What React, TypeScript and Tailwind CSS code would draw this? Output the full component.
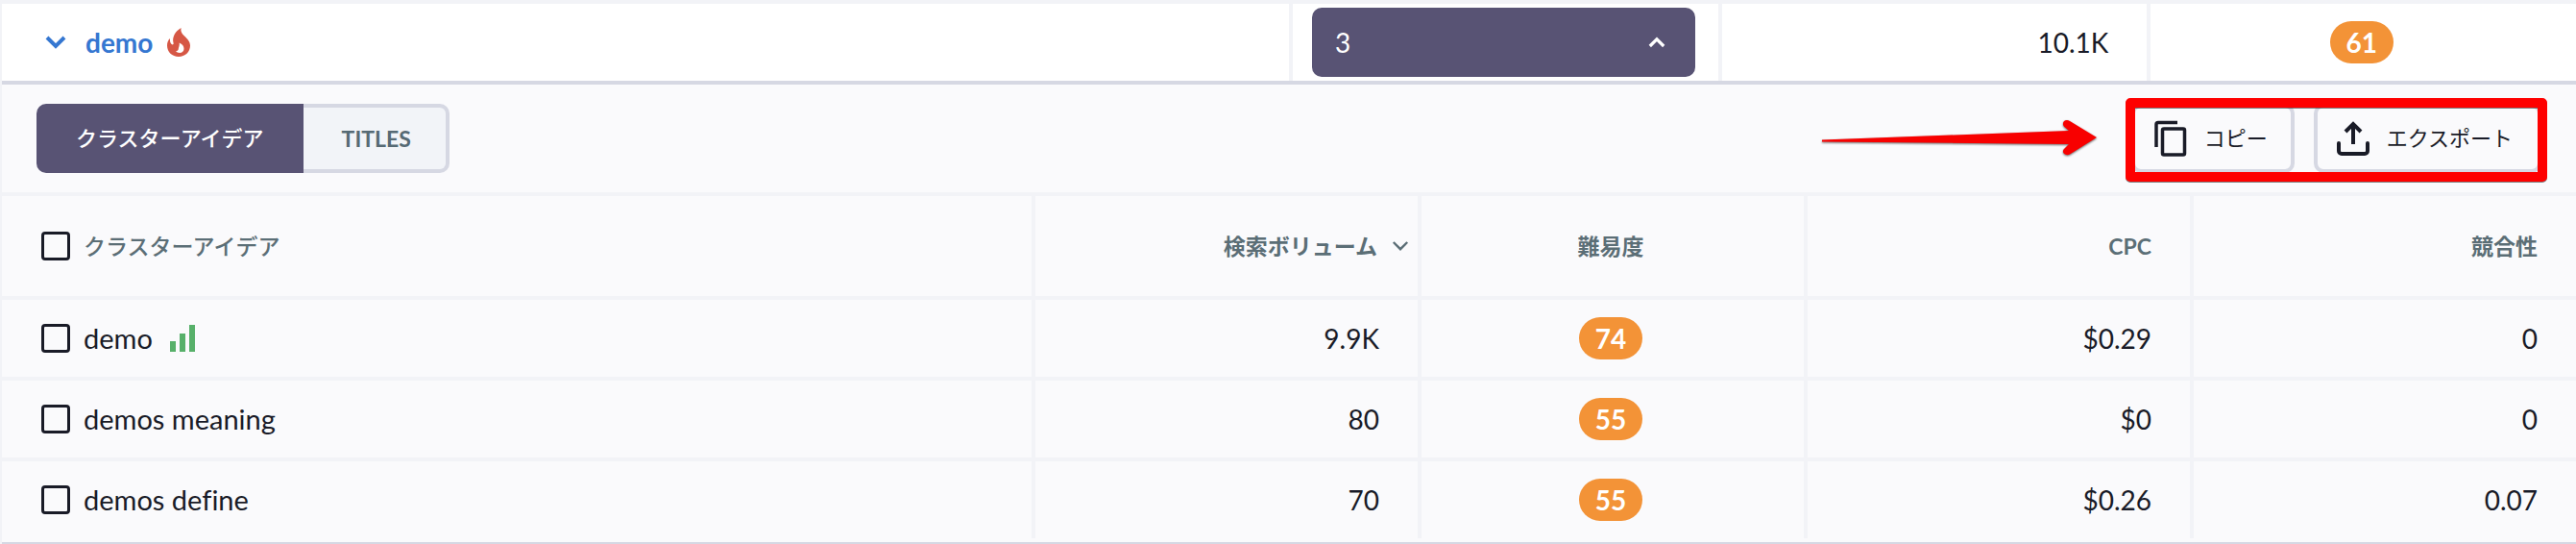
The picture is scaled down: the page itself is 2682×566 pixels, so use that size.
import type { ReactNode } from "react";

const rows = [
  { keyword: "demo", volume: "9.9K", difficulty: 74, cpc: "$0.29", competition: "0", trending: true },
  { keyword: "demos meaning", volume: "80", difficulty: 55, cpc: "$0", competition: "0" },
  { keyword: "demos define", volume: "70", difficulty: 55, cpc: "$0.26", competition: "0.07" },
];

const divider = "shadow-[inset_4px_0_0_#f2f3f7]";

function Chevron({ className, up = false, strokeWidth = 4 }: { className?: string; up?: boolean; strokeWidth?: number }) {
  return (
    <svg viewBox="0 0 40 40" fill="none" stroke="currentColor" strokeWidth={strokeWidth} className={className}>
      <path d={up ? "M11 25 20 16l9 9" : "M11 15l9 9 9-9"} />
    </svg>
  );
}

function Flame() {
  return (
    <svg viewBox="0 0 24 30" className="h-[30px] w-6 text-[#d65745]" fill="currentColor">
      <path
        fillRule="evenodd"
        d="M14.600 0C13.800 4 15.500 6 18 8.500 21 11.500 24 14 24 18.500 24 25 18.800 30 12 30S0 25 0 18.500C0 15.500.8 13 3 11c-.3 3 .3 5.500 2.500 6.500.8 0 1.500-.7 1-2C5 9.500 8.500 3.500 14.600 0ZM12.700 15.500c.4 3.300-.7 4.300-1 6.700-.2 1.200-1.300 2-2.700 1.800.8 1.300 2.200 2 4 2 2.700 0 4.500-1.700 4.500-4.200 0-2.700-1.800-5-4.800-6.300Z"
      />
    </svg>
  );
}

function SignalBars() {
  return (
    <svg viewBox="0 0 26 28" className="h-7 w-[26px]" fill="#57b06a">
      <rect y="17" width="6" height="11" />
      <rect x="10" y="9" width="6" height="19" />
      <rect x="20" width="6" height="28" />
    </svg>
  );
}

function CopyIcon() {
  return (
    <svg viewBox="0 0 40 40" className="size-10" fill="none" stroke="currentColor" strokeWidth="3.5">
      <path d="M6 29V5.500a2 2 0 0 1 2-2H28" />
      <rect x="12.500" y="10" width="23" height="27" rx="1.500" />
    </svg>
  );
}

function ExportIcon() {
  return (
    <svg viewBox="0 0 40 40" className="size-10" fill="none" stroke="currentColor" strokeWidth="4">
      <path d="M6 25v8a3 3 0 0 0 3 3h24a3 3 0 0 0 3-3v-8" strokeLinecap="round" />
      <path d="M21 26V6M13 13l8-8 8 8" />
    </svg>
  );
}

function Badge({ children }: { children: ReactNode }) {
  return (
    <span className="inline-flex h-11 w-[66px] items-center justify-center rounded-full bg-[#f39337] font-bold text-white">
      {children}
    </span>
  );
}

function Checkbox({ label }: { label: string }) {
  return (
    <input
      type="checkbox"
      aria-label={label}
      className="size-[30px] shrink-0 appearance-none rounded-[4px] border-3 border-[#191b27] checked:bg-[#191b27]"
    />
  );
}

function Toolbar() {
  return (
    <div className="flex h-28 items-center justify-between px-9 text-[22px]">
      <div className="flex h-[72px]">
        <button type="button" className="rounded-l-[10px] bg-[#585374] px-[41px] font-medium text-white">
          クラスターアイデア
        </button>
        <button
          type="button"
          className="rounded-r-[10px] border-4 border-l-0 border-[#d6d8e3] bg-[#f2f4f8] pr-9 pl-10 text-[23px] font-bold text-[#566a74]"
        >
          TITLES
        </button>
      </div>

      <div className="relative flex h-[72px] gap-5">
        <svg
          viewBox="0 0 288 38"
          className="absolute top-4 right-full mr-[35px] h-[38px] w-72 drop-shadow-[0_1px_1px_rgba(0,0,0,0.6)]"
        >
          <path d="M1 21.500 258 12 254 8.500C249 4 254-1 259 2L287 19 259 36.500C254 39 249 34 254 30L258 26 1 23.500Z" fill="#f80000" />
        </svg>
        <button type="button" className="flex items-center gap-4 rounded-[10px] border-4 border-[#d6d8e3] pr-6 pl-4">
          <CopyIcon />
          コピー
        </button>
        <button type="button" className="flex items-center gap-4 rounded-[10px] border-4 border-[#d6d8e3] pr-[26px] pl-4">
          <ExportIcon />
          エクスポート
        </button>
        <div className="pointer-events-none absolute -inset-x-1.5 -top-1.5 -bottom-[9px] rounded-[5px] border-10 border-[#fe0000] drop-shadow-[0_1px_0_rgba(0,0,0,0.5)]" />
      </div>
    </div>
  );
}

export default function App() {
  return (
    <main className="w-full border-t-4 border-l-2 border-[#f2f3f7] bg-[#fafafc] font-[Lato,'Noto_Sans_CJK_JP',sans-serif] text-[28px] leading-9 text-[#191b27]">
      <div className="grid h-[84px] grid-cols-6 border-b-4 border-[#d6d8e3] bg-white">
        <div className="col-span-3 flex items-center gap-[11px] pl-9 text-[#3577d1]">
          <Chevron className="size-10" />
          <a href="#demo" className="mr-1 font-bold">
            demo
          </a>
          <Flame />
        </div>
        <div className={`flex items-center px-6 ${divider}`}>
          <button
            type="button"
            aria-expanded="true"
            className="flex h-[72px] w-full items-center justify-between rounded-[10px] bg-[#585374] px-6 text-white"
          >
            3
            <Chevron up className="size-8" />
          </button>
        </div>
        <div className={`flex items-center justify-end pr-10 ${divider}`}>10.1K</div>
        <div className={`flex items-center justify-center ${divider}`}>
          <Badge>61</Badge>
        </div>
      </div>

      <Toolbar />

      <table className="w-full table-fixed border-separate border-spacing-0 border-b-2 border-[#d6d8e3] pb-1">
        <thead>
          <tr className="h-[112px] text-[23px] text-[#5b6e76] *:border-y-4 *:border-[#f2f3f7] *:p-0">
            <th className="font-medium">
              <div className="flex items-center gap-3.5 pl-[41px]">
                <Checkbox label="すべて選択" />
                クラスターアイデア
              </div>
            </th>
            <th className={`w-[15%] ${divider}`}>
              <button type="button" className="ml-auto flex items-center gap-2 pr-0.5">
                検索ボリューム
                <Chevron className="size-8" strokeWidth={3} />
              </button>
            </th>
            <th className={`w-[15%] ${divider}`}>難易度</th>
            <th className={`w-[15%] text-right ${divider}`}>
              <div className="pr-10">CPC</div>
            </th>
            <th className={`w-[15%] text-right ${divider}`}>
              <div className="pr-10">競合性</div>
            </th>
          </tr>
        </thead>
        <tbody>
          {rows.map((row) => (
            <tr key={row.keyword} className="h-[84px] *:border-b-4 *:border-[#f2f3f7] *:p-0 last:h-20 last:*:border-b-0">
              <td>
                <div className="flex items-center gap-3.5 pl-[41px]">
                  <Checkbox label={row.keyword} />
                  <span className="mr-1 text-[29px] [font-variant-ligatures:none]">{row.keyword}</span>
                  {row.trending && <SignalBars />}
                </div>
              </td>
              <td className={`text-right ${divider}`}>
                <div className="pr-10">{row.volume}</div>
              </td>
              <td className={`text-center ${divider}`}>
                <div className="flex justify-center">
                  <Badge>{row.difficulty}</Badge>
                </div>
              </td>
              <td className={`text-right ${divider}`}>
                <div className="pr-10">{row.cpc}</div>
              </td>
              <td className={`text-right ${divider}`}>
                <div className="pr-10">{row.competition}</div>
              </td>
            </tr>
          ))}
        </tbody>
      </table>
    </main>
  );
}
